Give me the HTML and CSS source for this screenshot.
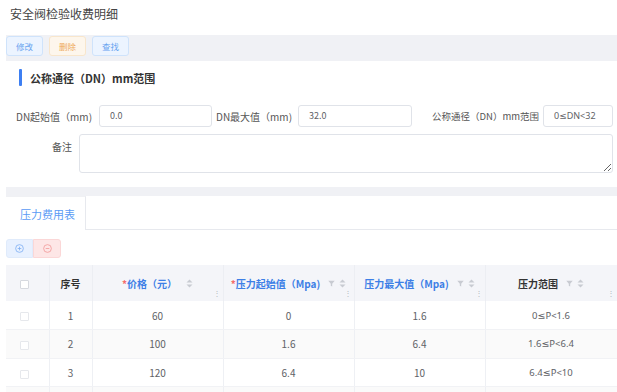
FILE: index.html
```html
<!DOCTYPE html>
<html>
<head>
<meta charset="utf-8">
<link rel="stylesheet" href="styles.css">
</head>
<body>
<div class="page-title">安全阀检验收费明细</div>
<div class="main">
  <div class="toolbar">
    <button class="btn btn-blue">修改</button>
    <button class="btn btn-orange">删除</button>
    <button class="btn btn-blue">查找</button>
  </div>
  <div class="card form-card">
    <div class="section-title"><span class="bar"></span>公称通径（DN）mm范围</div>
    <div class="form-row">
      <div class="lbl lbl1">DN起始值（mm)</div>
      <div class="inp inp1">0.0</div>
      <div class="lbl lbl2">DN最大值（mm)</div>
      <div class="inp inp2">32.0</div>
      <div class="lbl lbl3">公称通径（DN）mm范围</div>
      <div class="inp inp3 latin">0≤DN&lt;32</div>
    </div>
    <div class="form-row2">
      <div class="lbl lbl-remark">备注</div>
      <textarea class="remark"></textarea>
    </div>
  </div>
  <div class="card table-card">
    <div class="tabs">
      <div class="tab active">压力费用表</div>
      <div class="tab-rest"></div>
    </div>
    <div class="btn-group">
      <span class="gbtn gbtn-add">
        <svg width="9" height="9" viewBox="0 0 10 10"><circle cx="5" cy="5" r="4.3" fill="none" stroke="#7fb0f4" stroke-width="0.9"/><path d="M5 3v4M3 5h4" stroke="#7fb0f4" stroke-width="0.9"/></svg>
      </span>
      <span class="gbtn gbtn-del">
        <svg width="9" height="9" viewBox="0 0 10 10"><circle cx="5" cy="5" r="4.3" fill="none" stroke="#f39a9a" stroke-width="0.9"/><path d="M3 5h4" stroke="#f39a9a" stroke-width="0.9"/></svg>
      </span>
    </div>
    <table class="grid">
      <colgroup>
        <col class="c1"><col class="c2"><col class="c3"><col class="c4"><col class="c5"><col class="c6">
      </colgroup>
      <thead>
        <tr>
          <th><span class="chk chk-head"></span></th>
          <th class="dark">序号</th>
          <th class="blue"><span class="req">*</span>价格（元）<span class="sort"><svg width="7" height="9" viewBox="0 0 7 9"><path d="M3.5 0.5L6.5 3.5H0.5Z" fill="#c8cbd2"/><path d="M3.5 8.5L6.5 5.5H0.5Z" fill="#c8cbd2"/></svg></span><span class="rz">⋮</span></th>
          <th class="blue"><span class="req">*</span>压力起始值（Mpa)<span class="filter"><svg width="7" height="7" viewBox="0 0 7 7"><path d="M0.3 0.8H6.7L4.2 3.8V6.5L2.8 5.8V3.8Z" fill="#c8cbd2"/></svg></span><span class="sort s2"><svg width="7" height="9" viewBox="0 0 7 9"><path d="M3.5 0.5L6.5 3.5H0.5Z" fill="#c8cbd2"/><path d="M3.5 8.5L6.5 5.5H0.5Z" fill="#c8cbd2"/></svg></span><span class="rz">⋮</span></th>
          <th class="blue">压力最大值（Mpa)<span class="filter"><svg width="7" height="7" viewBox="0 0 7 7"><path d="M0.3 0.8H6.7L4.2 3.8V6.5L2.8 5.8V3.8Z" fill="#c8cbd2"/></svg></span><span class="sort s2"><svg width="7" height="9" viewBox="0 0 7 9"><path d="M3.5 0.5L6.5 3.5H0.5Z" fill="#c8cbd2"/><path d="M3.5 8.5L6.5 5.5H0.5Z" fill="#c8cbd2"/></svg></span><span class="rz">⋮</span></th>
          <th class="dark">压力范围<span class="filter"><svg width="7" height="7" viewBox="0 0 7 7"><path d="M0.3 0.8H6.7L4.2 3.8V6.5L2.8 5.8V3.8Z" fill="#c8cbd2"/></svg></span><span class="sort s2"><svg width="7" height="9" viewBox="0 0 7 9"><path d="M3.5 0.5L6.5 3.5H0.5Z" fill="#c8cbd2"/><path d="M3.5 8.5L6.5 5.5H0.5Z" fill="#c8cbd2"/></svg></span><span class="rz">⋮</span></th>
        </tr>
      </thead>
      <tbody>
        <tr><td><span class="chk"></span></td><td>1</td><td>60</td><td>0</td><td>1.6</td><td class="latin">0≤P&lt;1.6</td></tr>
        <tr class="stripe"><td><span class="chk"></span></td><td>2</td><td>100</td><td>1.6</td><td>6.4</td><td class="latin">1.6≤P&lt;6.4</td></tr>
        <tr><td><span class="chk"></span></td><td>3</td><td>120</td><td>6.4</td><td>10</td><td class="latin">6.4≤P&lt;10</td></tr>
        <tr class="stripe"><td><span class="chk"></span></td><td></td><td></td><td></td><td></td><td></td></tr>
      </tbody>
    </table>
  </div>
</div>
</body>
</html>
```

FILE: styles.css
```css
* { box-sizing: border-box; }
html, body { margin: 0; padding: 0; background: #fff; }
body {
  font-family: "Noto Sans CJK SC", "Noto Sans", sans-serif;
  color: #333;
  width: 617px;
  overflow: hidden;
}
.latin { font-family: "Noto Sans", "DejaVu Sans", "Noto Sans CJK SC", sans-serif; }
.page-title {
  height: 35px;
  padding-left: 10px;
  font-size: 12px;
  line-height: 28px;
  color: #444;
}
.main {
  margin-left: 6px;
  background: #f0f1f5;
}
.toolbar {
  display: flex;
  gap: 6px;
  padding: 1px 0 5px 0;
  height: 26px;
}
.btn {
  width: 37px;
  height: 20px;
  padding: 0;
  border-radius: 3px;
  font-family: inherit;
  font-size: 8.5px;
  line-height: 18px;
  cursor: pointer;
}
.btn-blue { background: #ecf4ff; border: 1px solid #cfe3fb; color: #6aa4f0; }
.btn-orange { background: #fdf6ec; border: 1px solid #f8e6cc; color: #eeaa5a; }

.card { background: #fff; }
.form-card {
  height: 126px;
  padding-top: 8px;
  margin-bottom: 9px;
}
.section-title {
  display: flex;
  align-items: center;
  height: 17px;
  padding-left: 13px;
  font-size: 11px;
  font-weight: bold;
  color: #333;
}
.section-title .bar {
  width: 3px;
  height: 17px;
  background: #3d7ff2;
  margin-right: 8px;
  border-radius: 1px;
}
.form-row {
  display: flex;
  align-items: center;
  margin-top: 19px;
  padding-left: 10px;
  height: 22px;
  font-size: 10px;
}
.lbl { color: #555; font-size: 10px; white-space: nowrap; }
.lbl1 { width: 83px; }
.lbl2 { width: 82px; margin-left: 4px; }
.lbl3 { width: 111px; margin-left: 20px; font-size: 9.5px; }
.inp {
  height: 22px;
  border: 1px solid #e0e3e9;
  border-radius: 3px;
  font-size: 9px;
  color: #606266;
  line-height: 20px;
  padding-left: 10px;
}
.inp1 { width: 113px; }
.inp2 { width: 114px; }
.inp3 { width: 70px; }
.form-row2 {
  display: flex;
  margin-top: 7px;
  padding-left: 10px;
}
.lbl-remark {
  width: 63px;
  text-align: right;
  padding-right: 7px;
  padding-top: 5px;
}
.remark {
  width: 534px;
  height: 39px;
  border: 1px solid #e0e3e9;
  border-radius: 3px;
  margin: 0;
  font-family: inherit;
}

.tabs {
  display: flex;
  height: 34px;
}
.tab {
  width: 80px;
  font-size: 11px;
  line-height: 34px;
  padding-left: 14px;
  color: #5a9bf5;
  border-right: 1px solid #e7e9ee;
  border-top: 1px solid #f0f1f4;
}
.tab-rest {
  flex: 1;
  border-bottom: 1px solid #e7e9ee;
}
.btn-group {
  display: flex;
  margin-top: 9px;
  height: 19px;
  margin-bottom: 7px;
}
.gbtn {
  height: 19px;
  display: flex;
  align-items: center;
  justify-content: center;
}
.gbtn svg { display: block; }
.gbtn-add { background: #e8f1ff; border: 1px solid #e0ebfb; border-radius: 3px 0 0 3px; width: 27px; }
.gbtn-del { background: #fde6e6; border: 1px solid #fbd7d7; border-radius: 0 3px 3px 0; width: 28px; }

.grid {
  width: 611px;
  table-layout: fixed;
  border-collapse: collapse;
  font-size: 10px;
}
.c1 { width: 43px; }
.c2 { width: 43px; }
.c3 { width: 131px; }
.c4 { width: 131px; }
.c5 { width: 131px; }
.c6 { width: 132px; }
.grid th {
  height: 36px;
  background: #f4f5f9;
  font-weight: bold;
  font-size: 10px;
  text-align: center;
  border-right: 1px solid #eceef3;
  position: relative;
  padding: 0;
  white-space: nowrap;
}
.grid th.dark { color: #333; }
.grid th.blue { color: #3d7fe6; }
.req { color: #f56c6c; }
.sort { display: inline-block; vertical-align: middle; margin-left: 9px; margin-top: -2px; }
.sort.s2 { margin-left: 4px; }
.filter { display: inline-block; vertical-align: middle; margin-left: 8px; margin-top: -2px; }
.sort svg, .filter svg { display: block; }
.rz {
  position: absolute;
  right: 2px;
  bottom: 4px;
  font-size: 8px;
  line-height: 8px;
  color: #b4b8c0;
  font-weight: normal;
}
.grid td {
  height: 28.6px;
  text-align: center;
  color: #606266;
  border-right: 1px solid #eef0f4;
  border-bottom: 1px solid #f1f2f5;
  padding: 0;
}
.grid td.latin { font-size: 9.5px; }
.grid tr.stripe td { background: #fafafa; }
.chk {
  display: inline-block;
  width: 9px;
  height: 9px;
  border: 1px solid #e6e8ec;
  border-radius: 1px;
  background: #fff;
  vertical-align: middle;
  margin-right: 5px;
}
.chk-head { border-color: #d6d9df; }
```
